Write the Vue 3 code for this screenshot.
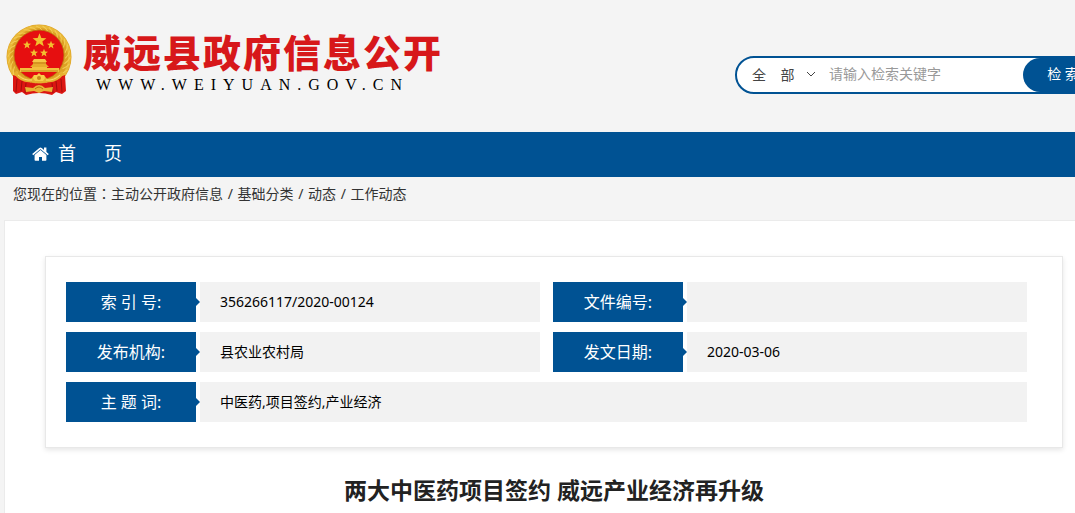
<script setup>
import { ref } from 'vue'

const scope = ref('all')
const keyword = ref('')

const crumbs = ['主动公开政府信息', '基础分类', '动态', '工作动态']

const rows = [
  [
    { label: '索 引 号:', value: '356266117/2020-00124' },
    { label: '文件编号:', value: '' },
  ],
  [
    { label: '发布机构:', value: '县农业农村局' },
    { label: '发文日期:', value: '2020-03-06' },
  ],
  [{ label: '主 题 词:', value: '中医药,项目签约,产业经济' }],
]

const star = '0,-10 2.6,-3.4 9.5,-3.1 4,1.3 5.9,8.1 0,4.2 -5.9,8.1 -4,1.3 -9.5,-3.1 -2.6,-3.4'
const smallStars = ['21 21', '45 21', '28 29', '38 29']
const grains = Array.from({ length: 30 }, (_, i) => i * 12)
</script>

<template>
  <div class="page">
    <header class="header">
      <a href="#" class="brand">
        <svg class="emblem" viewBox="0 0 68 72" aria-hidden="true">
          <circle cx="33" cy="33" r="32.5" fill="#dda024" />
          <circle cx="33" cy="33" r="30.5" fill="none" stroke="#e9b838" stroke-width="3" />
          <g fill="none" stroke="#f3cc55" stroke-width="1">
            <path v-for="a in grains" :key="a" d="M30 2 Q34 3 37 7" :transform="`rotate(${a} 33 33)`" />
          </g>
          <circle cx="33" cy="31" r="25" fill="#e60f10" stroke="#b8780f" stroke-width=".8" />
          <g fill="#f3c02f">
            <polygon :points="star" transform="translate(33.500 16.500) scale(.72)" />
            <polygon v-for="p in smallStars" :key="p" :points="star" :transform="`translate(${p}) scale(.42)`" />
          </g>
          <!-- gate tower -->
          <path d="M28 35 H39 L41 38 H26 Z" fill="#f6c646" />
          <path d="M27 38 H40 V40 L43 43 H24 L27 40 Z" fill="#e7ac2c" />
          <path d="M26 43 H41 V44 H53 V48 H14 V44 H26 Z" fill="#f3bf3c" />
          <path d="M27 39 H40 M15 47 H52" stroke="#bb7312" stroke-width=".8" />
          <!-- drapery -->
          <path d="M7 51 Q15 53 20 57 Q33 62 46 57 Q51 53 59 51 L60 67 L56 70 L50 68 L46 71 Q33 67 20 71 L16 68 L10 70 L7 67 Z" fill="#dc1612" />
          <path d="M11 55 L10 68 M16 57 L15 67 M20 59 L19 69 M55 55 L56 68 M50 57 L51 67 M46 59 L47 69" stroke="#a30d0b" stroke-width="1" />
          <path d="M10 47 Q16 55 25 55 L28 51 H38 L41 55 Q50 55 56 47 L58 50 Q50 60 40 58 L37 59 H29 L26 58 Q16 60 8 50 Z" fill="#e7b02f" />
          <path d="M12 51 Q18 57 26 56 M54 51 Q48 57 40 56" fill="none" stroke="#f9dc6c" stroke-width="1" />
          <path d="M27 54 L28 51 L31 51 L33 49 L35 51 L38 51 L39 54 L37 57 H29 Z" fill="#f8ce4a" />
          <circle cx="33" cy="54" r="2" fill="#c8851a" />
          <path d="M19 63 L27 64 Q33 58 39 64 L47 63 L46 68 L38 67 L33 69 L28 67 L20 68 Z" fill="#e8b335" />
          <path d="M29 65 Q33 61 37 65" fill="none" stroke="#b8780f" stroke-width="1" />
        </svg>
        <span class="brand-text">
          <span class="brand-name">威远县政府信息公开</span>
          <span class="brand-url">WWW.WEIYUAN.GOV.CN</span>
        </span>
      </a>

      <form class="search" @submit.prevent>
        <div class="scope">
          <select v-model="scope" aria-label="检索范围">
            <option value="all">全&nbsp;&nbsp;&nbsp;&nbsp;部</option>
          </select>
          <svg class="chevron" viewBox="0 0 10 6" aria-hidden="true">
            <path d="M1 1 L5 5 L9 1" fill="none" stroke="#444" />
          </svg>
        </div>
        <input v-model="keyword" type="text" placeholder="请输入检索关键字" aria-label="请输入检索关键字">
        <button type="submit">检&nbsp;索</button>
      </form>
    </header>

    <nav class="nav">
      <a href="#">
        <svg class="home" viewBox="0 0 17 14" aria-hidden="true">
          <path d="M8.500 3 L2.600 8 V13 q0 .8 .8 .8 H7 V10 H10 V13.800 H13.600 q.8 0 .8 -.8 V8 Z" fill="#fff" />
          <path d="M.7 7.600 L7.800 1.600 Q8.500 1.100 9.200 1.600 L16.300 7.600" fill="none" stroke="#fff" stroke-width="1.600" />
          <path d="M12 .6 H14.400 V6 L12 4 Z" fill="#fff" />
        </svg>
        <span>首&nbsp;&nbsp;&nbsp;&nbsp;&nbsp;&nbsp;页</span>
      </a>
    </nav>

    <div class="crumbs">
      <span>您现在的位置<span class="colon">：</span></span>
      <template v-for="(c, i) in crumbs" :key="c"><span v-if="i" class="sep"> / </span><a href="#">{{ c }}</a></template>
    </div>

    <main class="content">
      <div class="info">
        <table>
          <colgroup>
            <col class="col-label">
            <col class="col-value">
            <col class="col-label">
            <col>
          </colgroup>
          <tbody>
            <tr v-for="(row, i) in rows" :key="i">
              <template v-for="cell in row" :key="cell.label">
                <th scope="row"><div class="label">{{ cell.label }}</div></th>
                <td :colspan="row.length === 1 ? 3 : 1"><div class="value">{{ cell.value }}</div></td>
              </template>
            </tr>
          </tbody>
        </table>
      </div>
      <h1>两大中医药项目签约 威远产业经济再升级</h1>
    </main>
  </div>
</template>

<style>
body {
  background: #f4f4f4;
}
</style>

<style scoped>
.page {
  display: flex;
  flex-direction: column;
  min-height: 100vh;
  overflow: hidden;
  background: #f4f4f4;
  color: #333;
  font-family: "Noto Sans", "Noto Sans CJK SC", sans-serif;
  font-size: 14px;
}

a {
  color: inherit;
  text-decoration: none;
}

.header {
  display: flex;
  justify-content: space-between;
  align-items: flex-start;
  height: 132px;
  margin-right: -30px;
}

.brand {
  display: flex;
  padding: 24px 0 0 6px;
}

.emblem {
  width: 68px;
  height: 72px;
}

.brand-text {
  display: flex;
  flex-direction: column;
  padding: 6px 0 0 9px;
}

.brand-name {
  color: #d7181a;
  font-family: "Noto Sans CJK SC", sans-serif;
  font-size: 38px;
  font-weight: 900;
  line-height: 42px;
  letter-spacing: 2px;
}

.brand-url {
  padding-left: 13px;
  color: #000;
  font-family: "Liberation Serif", serif;
  font-size: 16px;
  line-height: 26px;
  letter-spacing: 7px;
}

.search {
  box-sizing: border-box;
  display: flex;
  width: 370px;
  height: 38px;
  margin-top: 56px;
  border: 2px solid #005293;
  border-radius: 19px;
  background: #fff;
}

.scope {
  position: relative;
  padding-left: 15px;
}

.scope select {
  width: 70px;
  height: 34px;
  padding: 0 0 2px;
  border: 0;
  appearance: none;
  background: transparent;
  color: #444;
  font: inherit;
}

.chevron {
  position: absolute;
  top: 13px;
  right: 6px;
  width: 10px;
  height: 6px;
  pointer-events: none;
}

.search input {
  flex: 1;
  min-width: 0;
  padding: 0 0 4px 7px;
  border: 0;
  outline: 0;
  background: transparent;
  color: #444;
  font: inherit;
}

.search input::placeholder {
  color: #999;
}

.search button {
  width: 80px;
  padding: 0 0 4px;
  border: 0;
  border-radius: 17px 0 0 17px;
  background: #005293;
  color: #fff;
  font: inherit;
}

.nav {
  background: #005293;
}

.nav a {
  display: inline-flex;
  align-items: center;
  gap: 9px;
  padding: 0 0 2px 32px;
  color: #fff;
  font-size: 18px;
  line-height: 43px;
}

.home {
  width: 17px;
  height: 14px;
}

.crumbs {
  display: flex;
  height: 43px;
  padding-left: 13px;
  line-height: 33px;
}

.colon {
  font-family: "Noto Sans CJK TC", sans-serif;
}

.sep {
  padding: 0 1px;
  white-space: pre;
}

.content {
  flex: 1;
  margin: 0 -29px 0 4px;
  padding: 35px 40px 0;
  border: 1px solid #ebebeb;
  border-bottom: 0;
  background: #fff;
}

.info {
  padding: 20px 35px 20px 20px;
  border: 1px solid #e8e8e8;
  box-shadow: 0 2px 5px rgba(0, 0, 0, 0.1);
}

table {
  width: 100%;
  border-spacing: 0;
  table-layout: fixed;
}

.col-label {
  width: 134px;
}

.col-value {
  width: 353px;
}

th,
td {
  padding: 5px 0;
}

.label {
  position: relative;
  margin-right: 4px;
  background: #005293;
  color: #fff;
  font-size: 16px;
  font-weight: 400;
  line-height: 40px;
}

.label::after {
  content: "";
  position: absolute;
  top: 16px;
  left: 100%;
  border: 4px solid transparent;
  border-left-color: #005293;
  border-right: 0;
}

.value {
  box-sizing: border-box;
  height: 40px;
  padding: 0 20px;
  background: #f2f2f2;
  color: #000;
  line-height: 40px;
}

td:not(:last-child) .value {
  margin-right: 13px;
}

h1 {
  margin: 26px 0 0;
  color: #222;
  font-size: 23px;
  font-weight: 700;
  line-height: 32px;
  text-align: center;
}
</style>
